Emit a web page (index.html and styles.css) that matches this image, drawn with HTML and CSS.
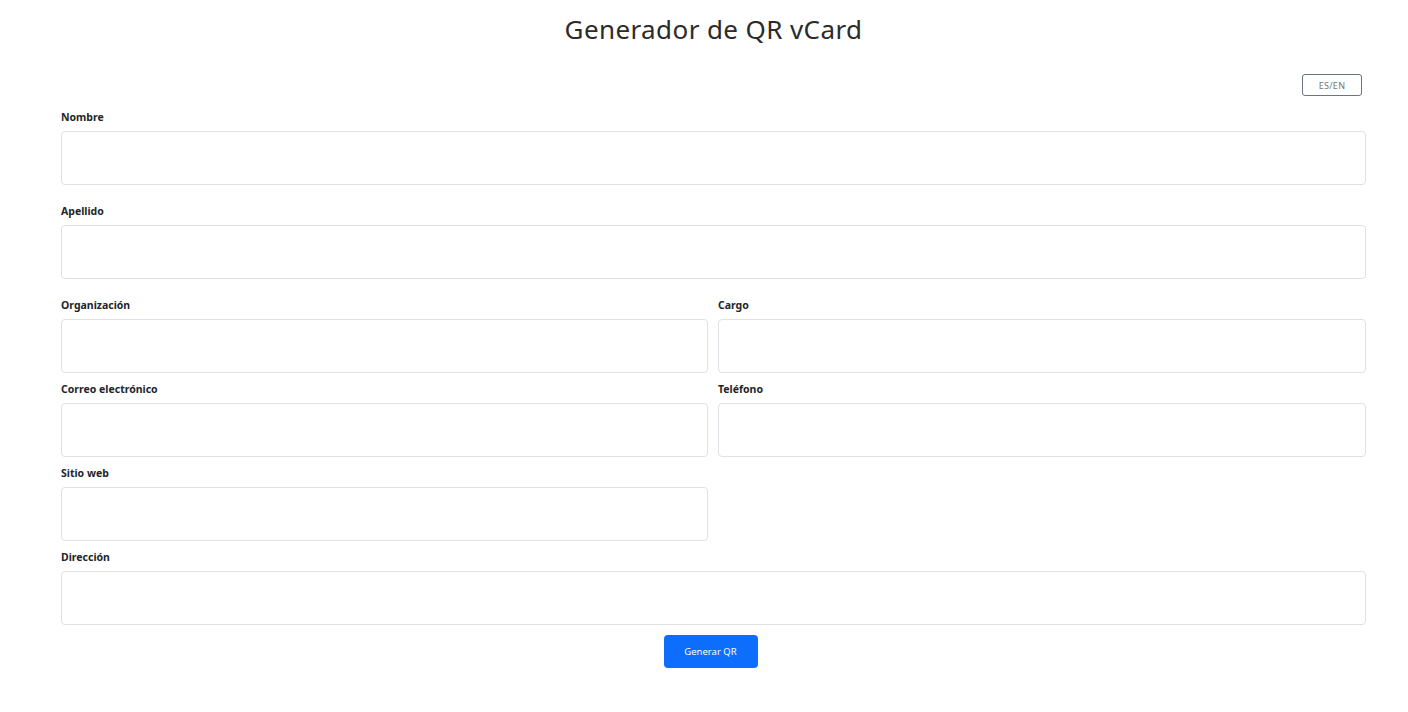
FILE: index.html
```html
<!DOCTYPE html>
<html lang="es">
<head>
  <meta charset="UTF-8" />
  <title>Generador de QR vCard</title>
  <link rel="stylesheet" href="styles.css">
</head>
<body>

  <div class="container">

    <h1>Generador de QR vCard</h1>

    <div class="lang-row">
      <button class="lang-btn">ES/EN</button>
    </div>

    <form class="vcard-form">
      <div class="field field-wide">
        <label for="nombre">Nombre</label>
        <input type="text" id="nombre" />
      </div>

      <div class="field field-wide">
        <label for="apellido">Apellido</label>
        <input type="text" id="apellido" />
      </div>

      <div class="grid">
        <div class="field">
          <label for="org">Organización</label>
          <input type="text" id="org" />
        </div>
        <div class="field">
          <label for="cargo">Cargo</label>
          <input type="text" id="cargo" />
        </div>
        <div class="field">
          <label for="email">Correo electrónico</label>
          <input type="email" id="email" />
        </div>
        <div class="field">
          <label for="tel">Teléfono</label>
          <input type="tel" id="tel" />
        </div>
        <div class="field">
          <label for="web">Sitio web</label>
          <input type="url" id="web" />
        </div>
      </div>

      <div class="field field-last">
        <label for="dir">Dirección</label>
        <input type="text" id="dir" />
      </div>

      <div class="actions">
        <button type="button" class="submit-btn">Generar QR</button>
      </div>
    </form>

  </div>

</body>
</html>
```

FILE: styles.css
```css
body {
  margin: 0;
  font-family: 'Noto Sans', 'Open Sans', sans-serif;
  background: #fff;
  color: #212529;
}

.container {
  padding: 0 42px 0 61px;
}

h1 {
  margin: 0;
  padding-top: 11px;
  font-family: 'Noto Sans', sans-serif;
  font-weight: 400;
  font-size: 26px;
  line-height: 36px;
  text-align: center;
  color: #2b2b2b;
  letter-spacing: 0.4px;
}

.lang-row {
  display: flex;
  justify-content: flex-end;
  padding-right: 4px;
  margin-top: 27px;
  height: 22px;
}

.lang-btn {
  width: 60px;
  height: 22px;
  padding: 0;
  font-family: inherit;
  font-size: 9px;
  letter-spacing: 0.3px;
  color: #6c757d;
  background: #fff;
  border: 1px solid #6c757d;
  border-radius: 3px;
}

.vcard-form {
  margin-top: 14px;
}

.field {
  display: flex;
  flex-direction: column;
  margin-bottom: 9px;
}

.field-wide {
  margin-bottom: 19px;
}

.field-last {
  margin-bottom: 10px;
}

.field label {
  font-size: 10.5px;
  font-weight: 700;
  line-height: 15px;
  margin-bottom: 6px;
  color: #212529;
}

.field input {
  height: 54px;
  box-sizing: border-box;
  border: 1px solid #dee2e6;
  border-radius: 4px;
  outline: none;
  font-size: 14px;
  padding: 6px 12px;
}

.grid {
  display: grid;
  grid-template-columns: 647px 1fr;
  column-gap: 10px;
}

.actions {
  display: flex;
  justify-content: center;
  padding-right: 6px;
}

.submit-btn {
  width: 94px;
  height: 33px;
  border: none;
  border-radius: 4px;
  background: #0d6efd;
  color: #fff;
  font-family: inherit;
  font-size: 9.5px;
}
```
